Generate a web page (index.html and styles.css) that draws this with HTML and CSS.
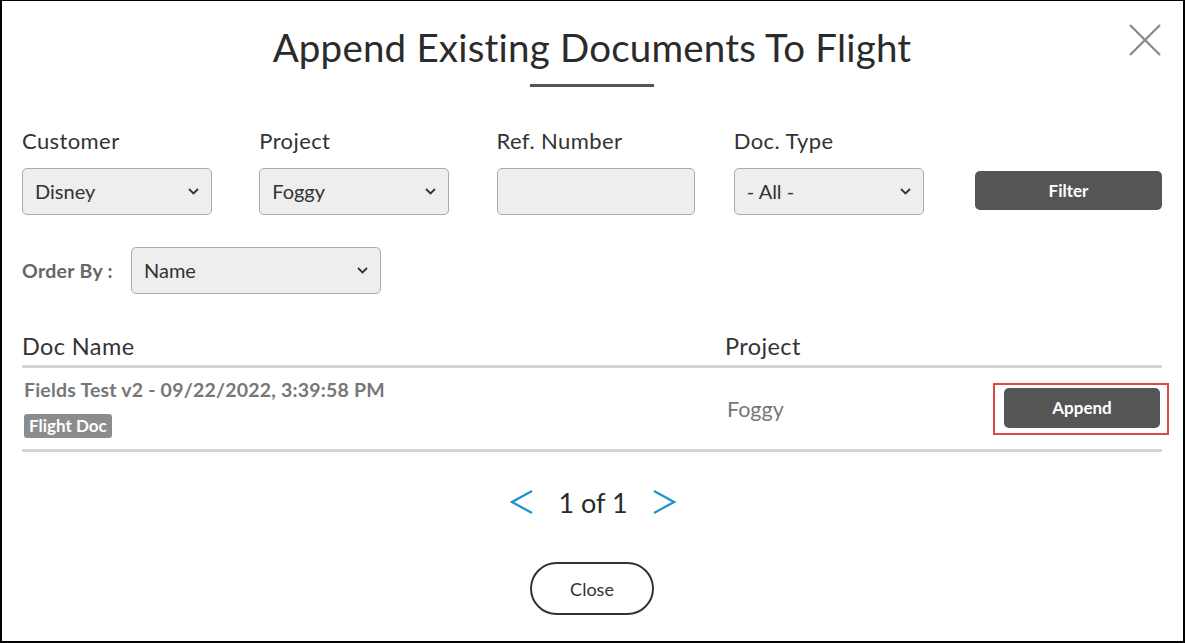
FILE: index.html
```html
<!DOCTYPE html>
<html>
<head>
<meta charset="utf-8">
<link rel="stylesheet" href="styles.css">
</head>
<body>
<div class="frame">
  <button class="x-close" aria-label="Close">
    <svg width="32" height="32" viewBox="0 0 32 32"><path d="M1 1 L31 31 M31 1 L1 31" stroke="#888" stroke-width="2.2" fill="none"/></svg>
  </button>
  <h1 class="title">Append Existing Documents To Flight</h1>
  <div class="title-bar"></div>

  <div class="filters">
    <div class="field">
      <label class="lbl">Customer</label>
      <div class="select"><span>Disney</span><svg class="chev" width="11" height="7" viewBox="0 0 11 7"><path d="M1 1 L5.5 5.5 L10 1" stroke="#333" stroke-width="1.8" fill="none"/></svg></div>
    </div>
    <div class="field">
      <label class="lbl">Project</label>
      <div class="select"><span>Foggy</span><svg class="chev" width="11" height="7" viewBox="0 0 11 7"><path d="M1 1 L5.5 5.5 L10 1" stroke="#333" stroke-width="1.8" fill="none"/></svg></div>
    </div>
    <div class="field">
      <label class="lbl">Ref. Number</label>
      <div class="select input"></div>
    </div>
    <div class="field">
      <label class="lbl">Doc. Type</label>
      <div class="select"><span>- All -</span><svg class="chev" width="11" height="7" viewBox="0 0 11 7"><path d="M1 1 L5.5 5.5 L10 1" stroke="#333" stroke-width="1.8" fill="none"/></svg></div>
    </div>
    <div class="field field-btn">
      <button class="btn filter-btn">Filter</button>
    </div>
  </div>

  <div class="order">
    <span class="order-lbl">Order By :</span>
    <div class="select order-select"><span>Name</span><svg class="chev" width="11" height="7" viewBox="0 0 11 7"><path d="M1 1 L5.5 5.5 L10 1" stroke="#333" stroke-width="1.8" fill="none"/></svg></div>
  </div>

  <div class="table">
    <div class="thead">
      <div class="c-name">Doc Name</div>
      <div class="c-proj">Project</div>
    </div>
    <div class="trow">
      <div class="c-name">
        <div class="doc-title">Fields Test v2 - 09/22/2022, 3:39:58 PM</div>
        <span class="badge">Flight Doc</span>
      </div>
      <div class="c-proj proj-val">Foggy</div>
      <div class="c-act">
        <div class="highlight"><button class="btn append-btn">Append</button></div>
      </div>
    </div>
  </div>

  <div class="pager">
    <svg class="arrow" width="24" height="26" viewBox="0 0 24 26"><path d="M22 2 L2 13 L22 24" stroke="#1c93cb" stroke-width="2.2" fill="none"/></svg>
    <span class="pg">1 of 1</span>
    <svg class="arrow" width="24" height="26" viewBox="0 0 24 26"><path d="M2 2 L22 13 L2 24" stroke="#1c93cb" stroke-width="2.2" fill="none"/></svg>
  </div>

  <div class="footer">
    <button class="close-btn">Close</button>
  </div>
</div>
</body>
</html>
```

FILE: styles.css
```css
* { box-sizing: border-box; }
html, body { margin: 0; padding: 0; background: #fff; }
body { font-family: "Lato", "Open Sans", sans-serif; color: #333; }

.frame {
  width: 1185px;
  height: 643px;
  border: 2px solid #000;
  border-top-width: 1px;
  position: relative;
  padding: 0 21px 0 20px;
}

.x-close {
  position: absolute;
  top: 23px;
  right: 22px;
  background: none;
  border: 0;
  padding: 0;
  width: 32px;
  height: 32px;
}

.title {
  margin: 22px 0 0;
  text-align: center;
  font-weight: 400;
  font-size: 38.5px;
  line-height: 48px;
  color: #2b2b2b;
  letter-spacing: 0.2px;
}
.title-bar {
  width: 124px;
  height: 3px;
  background: #555;
  margin: 13px auto 0;
}

.filters {
  display: flex;
  margin-top: 42px;
}
.field { width: 237.5px; display: flex; flex-direction: column; }
.field-btn { width: auto; flex: 1; justify-content: flex-end; padding-left: 4px; }
.lbl {
  font-size: 22px;
  letter-spacing: 0.4px;
  line-height: 24px;
  color: #333;
  height: 24px;
}
.select {
  margin-top: 15px;
  width: 190px;
  height: 47px;
  background: #eee;
  border: 1px solid #aaa;
  border-radius: 5px;
  display: flex;
  align-items: center;
  justify-content: space-between;
  padding: 0 12px 0 12px;
  font-size: 20px;
  color: #333;
}
.select span { position: relative; top: -1px; }
.input { width: 198px; }
.filter-btn {
  width: 187px;
  height: 39px;
  margin-bottom: 5px;
}
.btn {
  background: #555;
  color: #fff;
  border: 0;
  border-radius: 5px;
  font-family: "Lato", sans-serif;
  font-size: 17px;
  font-weight: 700;
}

.order {
  display: flex;
  align-items: center;
  margin-top: 32px;
}
.order-lbl {
  font-size: 19.5px;
  letter-spacing: 0.3px;
  color: #666;
  font-weight: 700;
  width: 109px;
}
.order-select { margin-top: 0; width: 250px; }

.table { margin-top: 36px; width: 1140px; }
.thead {
  display: flex;
  height: 38px;
  align-items: center;
  border-bottom: 3px solid #d5d5d5;
  font-size: 23.5px;
  letter-spacing: 0.4px;
  color: #333;
  padding-bottom: 4px;
}
.c-name { width: 703px; }
.c-proj { flex: 1; }
.trow {
  display: flex;
  align-items: center;
  height: 84px;
  border-bottom: 3px solid #d5d5d5;
}
.trow .c-name { padding-left: 2px; display: flex; flex-direction: column; align-items: flex-start; }
.doc-title { font-size: 19.5px; letter-spacing: 0.2px; font-weight: 700; color: #777; line-height: 22px; margin-top: 0; }
.badge {
  margin-top: 13px;
  background: #8c8c8c;
  color: #fff;
  font-size: 17px;
  font-weight: 700;
  padding: 2px 5px 2px;
  border-radius: 3px;
  line-height: 20px;
}
.proj-val { font-size: 21.5px; color: #777; padding-left: 2px; }
.c-act { width: 200px; display: flex; justify-content: flex-end; }
.highlight {
  border: 2px solid #e04848;
  padding: 3px 7px 5px 9px;
  margin-right: -7px;
}
.append-btn { width: 156px; height: 40px; font-size: 17px; }

.pager {
  display: flex;
  justify-content: center;
  align-items: center;
  margin-top: 30px;
  gap: 24px;
  height: 40px;
  padding-left: 2px;
}
.pg { font-size: 27px; color: #2b2b2b; }

.footer { display: flex; justify-content: center; margin-top: 40px; }
.close-btn {
  width: 124px;
  height: 53px;
  border: 2px solid #333;
  border-radius: 27px;
  background: #fff;
  font-family: "Lato", sans-serif;
  font-size: 18px;
  color: #333;
}
```
